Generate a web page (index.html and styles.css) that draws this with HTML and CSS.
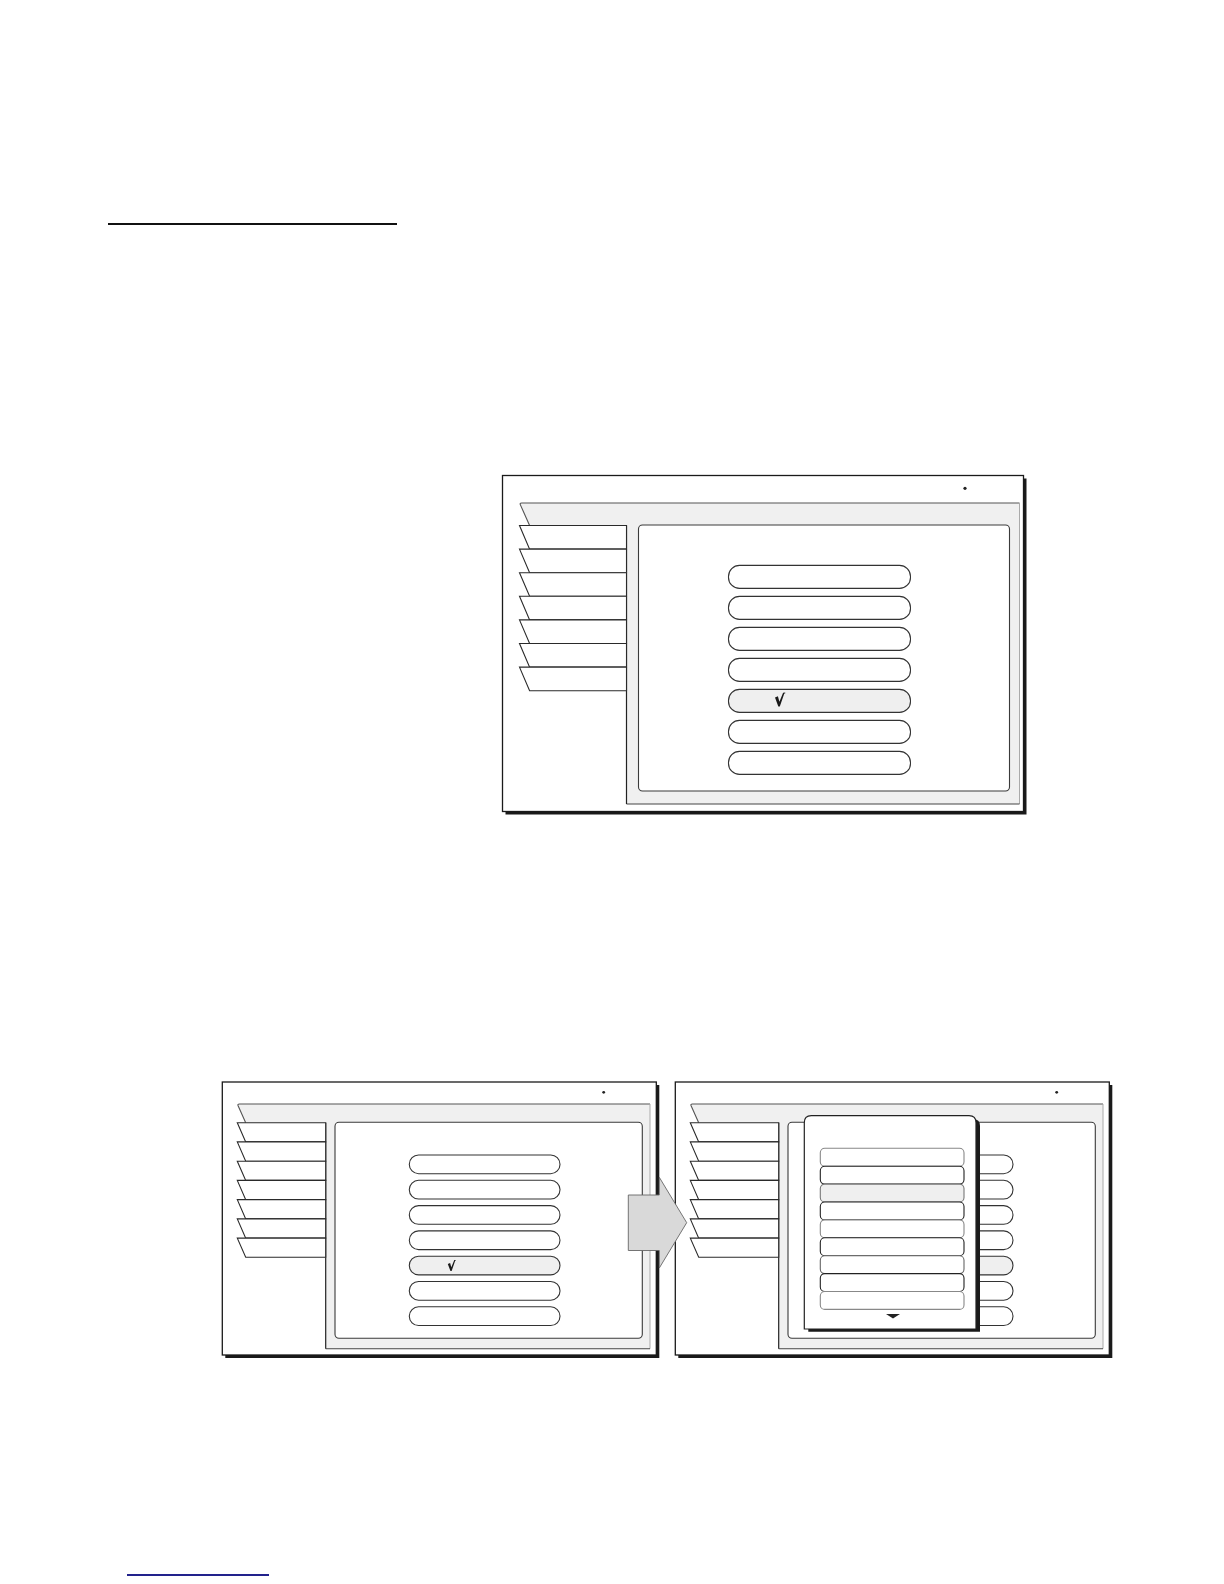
FILE: index.html
```html
<!DOCTYPE html>
<html lang="en">
<head>
<meta charset="utf-8">
<title>Menu screens</title>
<link rel="stylesheet" href="styles.css">
</head>
<body>
<main class="page">
  <div class="rule-top"></div>

  <figure class="figure figure-single">
    <svg class="diagram" width="530" height="344" viewBox="0 0 530 344">
      <rect x="5.5" y="5.5" width="521" height="336" fill="#1a1a1a"/>
      <rect x="2.5" y="2.5" width="521" height="336" fill="#fff" stroke="#1a1a1a" stroke-width="1.3"/>
      <circle cx="465" cy="15.3" r="1.6" fill="#222"/>
      <polygon points="19.5,30 519.5,30 519.5,331 126.5,331 126.5,52.5 29.6,52.5" fill="#f0f0f0"/>
      <path d="M29.6,52.5 L20.3,31.6 Q19.8,30 21.5,30 L519.5,30" fill="none" stroke="#555" stroke-width="1.1"/>
      <path d="M519.5,30 V331" fill="none" stroke="#aaa" stroke-width="1"/>
      <path d="M126.5,331 H519.5" fill="none" stroke="#444" stroke-width="1.1"/>
      <path d="M126.5,52.5 V331" fill="none" stroke="#222" stroke-width="1.2"/>
      <g fill="#fff" stroke="#2a2a2a" stroke-width="1.1">
        <polygon points="19.5,52.5 126.5,52.5 126.5,76.1 29.6,76.1"/>
        <polygon points="19.5,76.1 126.5,76.1 126.5,99.7 29.6,99.7"/>
        <polygon points="19.5,99.7 126.5,99.7 126.5,123.3 29.6,123.3"/>
        <polygon points="19.5,123.3 126.5,123.3 126.5,146.9 29.6,146.9"/>
        <polygon points="19.5,146.9 126.5,146.9 126.5,170.5 29.6,170.5"/>
        <polygon points="19.5,170.5 126.5,170.5 126.5,194.1 29.6,194.1"/>
        <polygon points="19.5,194.1 126.5,194.1 126.5,217.7 29.6,217.7"/>
      </g>
      <rect x="138.5" y="52" width="371" height="266" rx="4" fill="#fff" stroke="#3a3a3a" stroke-width="1.1"/>
      <g fill="#fff" stroke="#333" stroke-width="1.1">
        <rect x="228.5" y="92.4" width="182" height="23" rx="11"/>
        <rect x="228.5" y="123.4" width="182" height="23" rx="11"/>
        <rect x="228.5" y="154.4" width="182" height="23" rx="11"/>
        <rect x="228.5" y="185.4" width="182" height="23" rx="11"/>
        <rect x="228.5" y="216.4" width="182" height="23" rx="11" fill="#efefef"/>
        <rect x="228.5" y="247.4" width="182" height="23" rx="11"/>
        <rect x="228.5" y="278.4" width="182" height="23" rx="11"/>
      </g>
      <polygon transform="translate(275 219.5)" points="0,5 2.9,3.8 4.4,9.2 8.1,0.2 10.2,0 10.2,0.9 9.3,0.9 4.8,14 3.3,14" fill="#1a1a1a"/>
    </svg>
  </figure>

  <figure class="figure figure-pair">
    <svg class="diagram" width="442" height="282" viewBox="0 0 442 282">
      <rect x="5.3" y="5" width="434" height="273" fill="#1a1a1a"/>
      <rect x="2.3" y="2" width="434" height="273" fill="#fff" stroke="#1a1a1a" stroke-width="1.3"/>
      <circle cx="383.7" cy="12.3" r="1.4" fill="#222"/>
      <polygon points="17.3,24 430,24 430,268.7 105.7,268.7 105.7,42.7 25.7,42.7" fill="#f0f0f0"/>
      <path d="M25.7,42.7 L18,25.5 Q17.6,24 19.3,24 L430,24" fill="none" stroke="#555" stroke-width="1.1"/>
      <path d="M430,24 V268.7" fill="none" stroke="#aaa" stroke-width="1"/>
      <path d="M105.7,268.7 H430" fill="none" stroke="#444" stroke-width="1.1"/>
      <path d="M105.7,42.7 V268.7" fill="none" stroke="#222" stroke-width="1.2"/>
      <g fill="#fff" stroke="#2a2a2a" stroke-width="1.1">
        <polygon points="17.3,42.7 105.7,42.7 105.7,61.9 25.7,61.9"/>
        <polygon points="17.3,61.9 105.7,61.9 105.7,81.2 25.7,81.2"/>
        <polygon points="17.3,81.2 105.7,81.2 105.7,100.4 25.7,100.4"/>
        <polygon points="17.3,100.4 105.7,100.4 105.7,119.6 25.7,119.6"/>
        <polygon points="17.3,119.6 105.7,119.6 105.7,138.9 25.7,138.9"/>
        <polygon points="17.3,138.9 105.7,138.9 105.7,158.1 25.7,158.1"/>
        <polygon points="17.3,158.1 105.7,158.1 105.7,177.3 25.7,177.3"/>
      </g>
      <rect x="115" y="42.3" width="307.3" height="216" rx="4" fill="#fff" stroke="#3a3a3a" stroke-width="1.1"/>
      <g fill="#fff" stroke="#333" stroke-width="1.1">
        <rect x="189.3" y="75" width="150.7" height="18.7" rx="9.3"/>
        <rect x="189.3" y="100.3" width="150.7" height="18.7" rx="9.3"/>
        <rect x="189.3" y="125.6" width="150.7" height="18.7" rx="9.3"/>
        <rect x="189.3" y="150.9" width="150.7" height="18.7" rx="9.3"/>
        <rect x="189.3" y="176.2" width="150.7" height="18.7" rx="9.3" fill="#efefef"/>
        <rect x="189.3" y="201.5" width="150.7" height="18.7" rx="9.3"/>
        <rect x="189.3" y="226.8" width="150.7" height="18.7" rx="9.3"/>
      </g>
      <polygon transform="translate(227.8 179.9) scale(0.8)" points="0,5 2.9,3.8 4.4,9.2 8.1,0.2 10.2,0 10.2,0.9 9.3,0.9 4.8,14 3.3,14" fill="#1a1a1a"/>
    </svg>

    <svg class="diagram" width="442" height="282" viewBox="0 0 442 282">
      <rect x="5.3" y="5" width="434" height="273" fill="#1a1a1a"/>
      <rect x="2.3" y="2" width="434" height="273" fill="#fff" stroke="#1a1a1a" stroke-width="1.3"/>
      <circle cx="383.7" cy="12.3" r="1.4" fill="#222"/>
      <polygon points="17.3,24 430,24 430,268.7 105.7,268.7 105.7,42.7 25.7,42.7" fill="#f0f0f0"/>
      <path d="M25.7,42.7 L18,25.5 Q17.6,24 19.3,24 L430,24" fill="none" stroke="#555" stroke-width="1.1"/>
      <path d="M430,24 V268.7" fill="none" stroke="#aaa" stroke-width="1"/>
      <path d="M105.7,268.7 H430" fill="none" stroke="#444" stroke-width="1.1"/>
      <path d="M105.7,42.7 V268.7" fill="none" stroke="#222" stroke-width="1.2"/>
      <g fill="#fff" stroke="#2a2a2a" stroke-width="1.1">
        <polygon points="17.3,42.7 105.7,42.7 105.7,61.9 25.7,61.9"/>
        <polygon points="17.3,61.9 105.7,61.9 105.7,81.2 25.7,81.2"/>
        <polygon points="17.3,81.2 105.7,81.2 105.7,100.4 25.7,100.4"/>
        <polygon points="17.3,100.4 105.7,100.4 105.7,119.6 25.7,119.6"/>
        <polygon points="17.3,119.6 105.7,119.6 105.7,138.9 25.7,138.9"/>
        <polygon points="17.3,138.9 105.7,138.9 105.7,158.1 25.7,158.1"/>
        <polygon points="17.3,158.1 105.7,158.1 105.7,177.3 25.7,177.3"/>
      </g>
      <rect x="115" y="42.3" width="307.3" height="216" rx="4" fill="#fff" stroke="#3a3a3a" stroke-width="1.1"/>
      <g fill="#fff" stroke="#333" stroke-width="1.1">
        <rect x="189.3" y="75" width="150.7" height="18.7" rx="9.3"/>
        <rect x="189.3" y="100.3" width="150.7" height="18.7" rx="9.3"/>
        <rect x="189.3" y="125.6" width="150.7" height="18.7" rx="9.3"/>
        <rect x="189.3" y="150.9" width="150.7" height="18.7" rx="9.3"/>
        <rect x="189.3" y="176.2" width="150.7" height="18.7" rx="9.3" fill="#efefef"/>
        <rect x="189.3" y="201.5" width="150.7" height="18.7" rx="9.3"/>
        <rect x="189.3" y="226.8" width="150.7" height="18.7" rx="9.3"/>
      </g>
      <path d="M135.3,251.7 V46 Q135.3,39 142.3,39 H300 Q307,39 307,46 V251.7 Z" fill="#1a1a1a"/>
      <path d="M131.3,249 V42.7 Q131.3,35.7 138.3,35.7 H296 Q303,35.7 303,42.7 V249 Z" fill="#fff" stroke="#222" stroke-width="1.2"/>
      <g fill="#fff" stroke-width="1.1">
        <rect x="147.3" y="68.3" width="143.7" height="17.9" rx="4.5" stroke="#888"/>
        <rect x="147.3" y="86.2" width="143.7" height="17.9" rx="4.5" stroke="#222"/>
        <rect x="147.3" y="104.1" width="143.7" height="17.9" rx="4.5" stroke="#777" fill="#efefef"/>
        <rect x="147.3" y="122" width="143.7" height="17.9" rx="4.5" stroke="#222"/>
        <rect x="147.3" y="139.9" width="143.7" height="17.9" rx="4.5" stroke="#888"/>
        <rect x="147.3" y="157.8" width="143.7" height="17.9" rx="4.5" stroke="#222"/>
        <rect x="147.3" y="175.7" width="143.7" height="17.9" rx="4.5" stroke="#666"/>
        <rect x="147.3" y="193.6" width="143.7" height="17.9" rx="4.5" stroke="#222"/>
        <rect x="147.3" y="211.5" width="143.7" height="17.9" rx="4.5" stroke="#888"/>
      </g>
      <polygon points="213,234 227,234 220,238.6" fill="#222"/>
    </svg>

    <svg class="arrow" width="66" height="96" viewBox="0 0 66 96">
      <polygon points="2.3,20 33.3,20 33.3,2.3 60.7,47.7 33.3,93 33.3,75.5 2.3,75.5" fill="#d9d9d9" stroke="#666" stroke-width="0.9"/>
    </svg>
  </figure>

  <div class="rule-bottom"></div>
</main>
</body>
</html>
```

FILE: styles.css
```css
* {
  box-sizing: border-box;
}

html,
body {
  margin: 0;
  padding: 0;
  background: #fff;
  font-family: "Liberation Sans", Arial, sans-serif;
}

.page {
  width: 1224px;
  min-height: 1584px;
  padding-top: 223px;
  overflow: hidden;
}

.rule-top {
  margin-left: 108px;
  width: 289px;
  height: 2px;
  background: #111;
}

.figure {
  margin: 0;
}

.diagram {
  display: block;
  flex: none;
}

.figure-single {
  margin-top: 248px;
  margin-left: 500px;
  width: 530px;
}

.figure-pair {
  position: relative;
  display: flex;
  gap: 11px;
  margin-top: 263px;
  margin-left: 220px;
  width: 895px;
}

.arrow {
  position: absolute;
  left: 406px;
  top: 95px;
  display: block;
}

.rule-bottom {
  margin-top: 212px;
  margin-left: 127px;
  width: 142px;
  height: 2px;
  background: #22228c;
}
```
